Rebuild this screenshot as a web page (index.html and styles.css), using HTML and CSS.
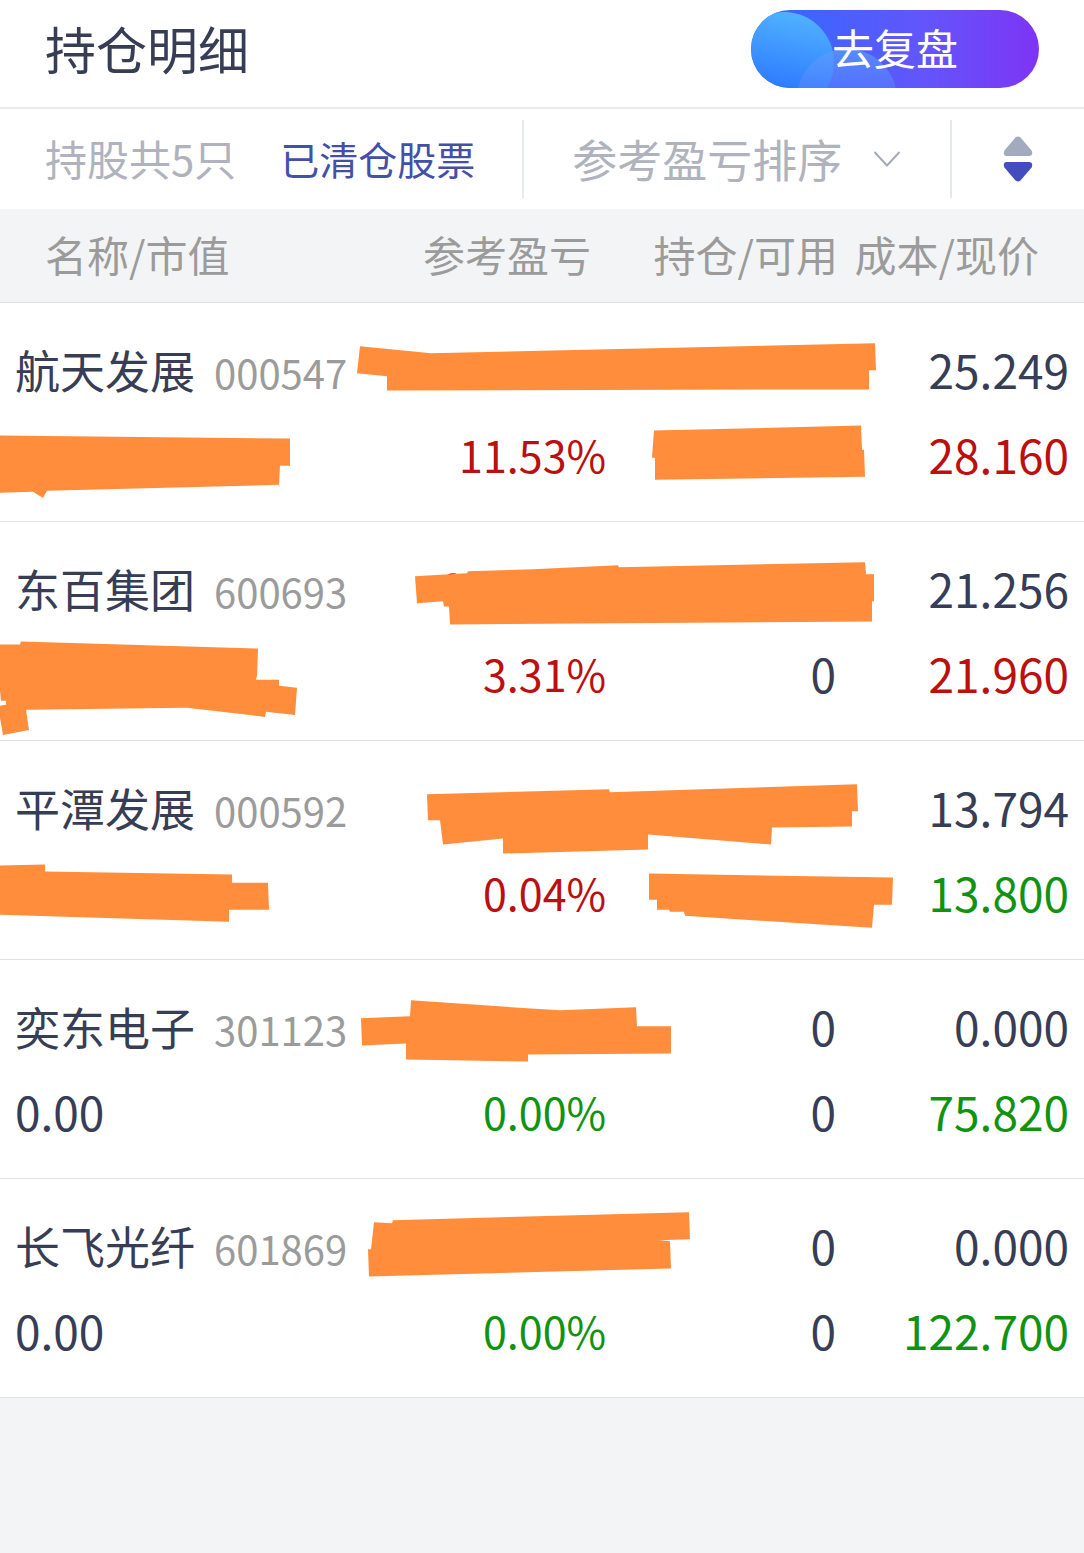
FILE: index.html
```html
<!DOCTYPE html>
<html lang="zh-cn">
<head>
    <meta charset="UTF-8">
    <meta name="viewport" content="width=device-width, initial-scale=1">
    <title>持仓明细</title>
    <link rel="stylesheet" href="styles.css">
</head>
<body>
    <header class="page-header">
        <h1>持仓明细</h1>
        <button class="review-btn" type="button">
            <svg class="review-bg" viewBox="0 0 288 78" preserveAspectRatio="none" aria-hidden="true">
                <defs>
                    <linearGradient id="big" x1="0.6" y1="0" x2="0.4" y2="1">
                        <stop offset="0" stop-color="#50b2ff"/>
                        <stop offset="0.8" stop-color="#2c78ff"/>
                    </linearGradient>
                    <linearGradient id="small" x1="0" y1="0" x2="0" y2="1">
                        <stop offset="0" stop-color="#5a9cff" stop-opacity="0.75"/>
                        <stop offset="0.5" stop-color="#5a80ff" stop-opacity="0.4"/>
                    </linearGradient>
                </defs>
                <circle cx="33" cy="52" r="50" fill="url(#big)"/>
                <circle cx="96" cy="89" r="50" fill="url(#small)"/>
            </svg>
            <span>去复盘</span>
        </button>
    </header>

    <div class="filter-bar">
        <div class="filter-left">
            <span class="count">持股共5只</span>
            <a class="cleared" href="#">已清仓股票</a>
        </div>
        <div class="filter-sort">
            <select aria-label="排序">
                <option>参考盈亏排序</option>
            </select>
            <svg class="chevron" viewBox="0 0 28 18" aria-hidden="true">
                <path d="M1.5 2 L14 15.5 L26.5 2"/>
            </svg>
        </div>
        <button class="order-btn" type="button" aria-label="排序">
            <svg viewBox="0 0 30 46" aria-hidden="true">
                <path class="up" d="M12.5 1.6 Q15 -0.6 17.5 1.6 L28.6 14.5 Q30.5 19.5 26.5 20 H3.5 Q-0.5 19.5 1.4 14.5 Z"/>
                <path class="down" d="M12.5 44.4 Q15 46.6 17.5 44.4 L28.6 31.5 Q30.5 26.5 26.5 26 H3.5 Q-0.5 26.5 1.4 31.5 Z"/>
            </svg>
        </button>
    </div>

    <table class="holdings">
        <thead>
            <tr>
                <th class="col-name">名称/市值</th>
                <th class="col-profit">参考盈亏</th>
                <th class="col-amount">持仓/可用</th>
                <th class="col-price">成本/现价</th>
            </tr>
        </thead>
        <tbody>
            <tr>
                <td>
                    <div class="line"><span class="name">航天发展</span><span class="code">000547</span></div>
                    <div class="line"></div>
                    <svg class="mask" viewBox="0 0 1084 218" preserveAspectRatio="none" aria-hidden="true">
                        <path d="M360 43 L431 50 L875 40 L876 67 L869 67 L869 86 L387 87 L387 73 L357 70 Z"/>
                        <path d="M0 132 L290 135 L290 162 L280 162 L279 181 L47 187 L43 194 L33 188 L0 189 Z"/>
                        <path d="M654 127 L861 122 L862 146 L864 146 L865 173 L655 176 L655 154 L652 154 Z"/>
                    </svg>
                </td>
                <td>
                    <div class="line"></div>
                    <div class="line percent rise">11.53%</div>
                </td>
                <td></td>
                <td>
                    <div class="line">25.249</div>
                    <div class="line rise">28.160</div>
                </td>
            </tr>
            <tr>
                <td>
                    <div class="line"><span class="name">东百集团</span><span class="code">600693</span></div>
                    <div class="line"></div>
                    <svg class="mask" viewBox="0 0 1084 218" preserveAspectRatio="none" aria-hidden="true">
                        <ellipse class="peek" cx="453" cy="55" rx="7" ry="4"/>
                        <path d="M415 54 L467 51 L468 49 L533 47 L618 43 L619 45 L865 40 L866 52 L874 52 L874 79 L872 79 L872 99 L450 102 L449 84 L444 84 L443 79 L417 81 Z"/>
                        <path d="M0 122 L20 122 L21 119 L258 126 L257 153 L256 157 L279 157 L279 163 L297 165 L295 192 L266 189 L265 194 L187 185 L26 187 L29 207 L3 212 L0 195 L0 183 L6 182 L6 178 L1 178 L0 168 Z"/>
                    </svg>
                </td>
                <td>
                    <div class="line"></div>
                    <div class="line percent rise">3.31%</div>
                </td>
                <td>
                    <div class="line"></div>
                    <div class="line">0</div>
                </td>
                <td>
                    <div class="line">21.256</div>
                    <div class="line rise">21.960</div>
                </td>
            </tr>
            <tr>
                <td>
                    <div class="line"><span class="name">平潭发展</span><span class="code">000592</span></div>
                    <div class="line"></div>
                    <svg class="mask" viewBox="0 0 1084 218" preserveAspectRatio="none" aria-hidden="true">
                        <path d="M427 53 L609 48 L610 51 L857 43 L858 70 L852 70 L852 85 L772 86 L771 103 L648 93 L648 108 L503 112 L503 97 L443 103 L440 79 L428 79 Z"/>
                        <path d="M0 124 L45 123 L45 130 L232 133 L232 141 L268 141 L269 168 L229 168 L229 180 L0 173 Z"/>
                        <path d="M649 132 L893 136 L892 163 L874 163 L872 186 L685 174 L684 170 L670 170 L669 168 L657 168 L657 158 L649 158 Z"/>
                    </svg>
                </td>
                <td>
                    <div class="line"></div>
                    <div class="line percent rise">0.04%</div>
                </td>
                <td></td>
                <td>
                    <div class="line">13.794</div>
                    <div class="line fall">13.800</div>
                </td>
            </tr>
            <tr>
                <td>
                    <div class="line"><span class="name">奕东电子</span><span class="code">301123</span></div>
                    <div class="line">0.00</div>
                    <svg class="mask" viewBox="0 0 1084 218" preserveAspectRatio="none" aria-hidden="true">
                        <path d="M361 58 L410 56 L411 40 L527 48 L560 50 L636 47 L637 66 L671 66 L671 93 L528 94 L528 101 L406 99 L406 83 L362 85 Z"/>
                    </svg>
                </td>
                <td>
                    <div class="line"></div>
                    <div class="line percent fall">0.00%</div>
                </td>
                <td>
                    <div class="line">0</div>
                    <div class="line">0</div>
                </td>
                <td>
                    <div class="line">0.000</div>
                    <div class="line fall">75.820</div>
                </td>
            </tr>
            <tr>
                <td>
                    <div class="line"><span class="name">长飞光纤</span><span class="code">601869</span></div>
                    <div class="line">0.00</div>
                    <svg class="mask" viewBox="0 0 1084 218" preserveAspectRatio="none" aria-hidden="true">
                        <path d="M374 43 L392 44 L393 41 L689 33 L690 60 L659 61 L670 62 L671 89 L369 97 L368 70 L371 70 Z"/>
                    </svg>
                </td>
                <td>
                    <div class="line"></div>
                    <div class="line percent fall">0.00%</div>
                </td>
                <td>
                    <div class="line">0</div>
                    <div class="line">0</div>
                </td>
                <td>
                    <div class="line">0.000</div>
                    <div class="line fall">122.700</div>
                </td>
            </tr>
        </tbody>
    </table>
</body>
</html>
```

FILE: styles.css
```css
:root {
    --text: #373d54;
    --muted: #9b9b9b;
    --filter: #b0b3bd;
    --link: #444fa6;
    --rise: #bb0f10;
    --fall: #119311;
    --line: #e0e1e4;
    --background: #f3f4f6;
    --mask: #ff8d3b;
}

* {
    box-sizing: border-box;
}

body {
    margin: 0;
    background: var(--background);
    color: var(--text);
    font-family: "Noto Sans CJK SC", sans-serif;
}

button, select {
    border: none;
    background: none;
    padding: 0;
    font-family: inherit;
    cursor: pointer;
}

.page-header {
    display: flex;
    justify-content: space-between;
    align-items: flex-start;
    padding: 10px 45px 19px;
    background: white;
    border-bottom: 2px solid #e8eaec;
}

h1 {
    margin: 0;
    font-size: 51px;
    line-height: 76px;
    font-weight: 400;
}

.review-btn {
    position: relative;
    width: 288px;
    height: 78px;
    padding-bottom: 4px;
    border-radius: 39px;
    overflow: hidden;
    background: linear-gradient(90deg, #2c6cff, #6355fb 60%, #7e34f5);
    color: white;
    font-size: 42px;
    line-height: 74px;
}

.review-btn span {
    position: relative;
}

.review-bg {
    position: absolute;
    left: 0;
    top: 0;
    width: 100%;
    height: 100%;
}

.filter-bar {
    display: flex;
    height: 100px;
    padding: 11px 0;
    background: white;
    font-size: 42px;
    line-height: 76px;
    color: var(--filter);
    white-space: nowrap;
}

.filter-left {
    display: flex;
    width: 48.3%;
    padding-left: 45px;
    gap: 44px;
    border-right: 2px solid #e8ebee;
}

.cleared {
    font-size: 39px;
    color: var(--link);
    text-decoration: none;
}

.filter-sort {
    display: flex;
    flex: 1;
    align-items: center;
    justify-content: center;
    gap: 30px;
}

.filter-sort select {
    appearance: none;
    color: var(--filter);
    font-size: 45px;
    line-height: 76px;
}

.chevron {
    width: 28px;
    height: 18px;
    fill: none;
    stroke: #a3abba;
    stroke-width: 2;
}

.order-btn {
    display: flex;
    align-items: center;
    justify-content: center;
    width: 134px;
    border-left: 2px solid #e4e9ec;
}

.order-btn svg {
    width: 30px;
    height: 46px;
}

.up {
    fill: #a2abbd;
}

.down {
    fill: #444dbe;
}

.holdings {
    width: 100%;
    table-layout: fixed;
    border-collapse: separate;
    border-spacing: 0;
    white-space: nowrap;
    text-align: right;
}

th {
    height: 94px;
    padding: 0 17px 4px 0;
    border-bottom: 1px solid var(--line);
    color: var(--muted);
    font-size: 42px;
    line-height: 88px;
    font-weight: 400;
}

.col-name {
    width: 33.2%;
    padding-left: 45px;
    text-align: left;
}

.col-profit {
    width: 22.9%;
}

.col-amount {
    width: 21.2%;
    padding-right: 0;
}

.col-price {
    padding-right: 45px;
}

tbody tr {
    position: relative;
    background: white;
}

td {
    height: 219px;
    padding: 24px 2px 24px 0;
    border-bottom: 1px solid var(--line);
    font-size: 46px;
    vertical-align: top;
}

td:first-child {
    padding-left: 15px;
    text-align: left;
}

td:last-child {
    padding-right: 15px;
}

.line {
    height: 85px;
    line-height: 85px;
}

.name {
    margin-right: 19px;
    font-size: 45px;
}

.code {
    font-size: 40px;
    color: var(--muted);
}

.percent {
    font-size: 43px;
}

.rise {
    color: var(--rise);
}

.fall {
    color: var(--fall);
}

/* 涂抹遮挡 */
.mask {
    position: absolute;
    left: 0;
    top: 0;
    width: 100%;
    height: 100%;
    fill: var(--mask);
    pointer-events: none;
}

.peek {
    fill: var(--rise);
}
```
